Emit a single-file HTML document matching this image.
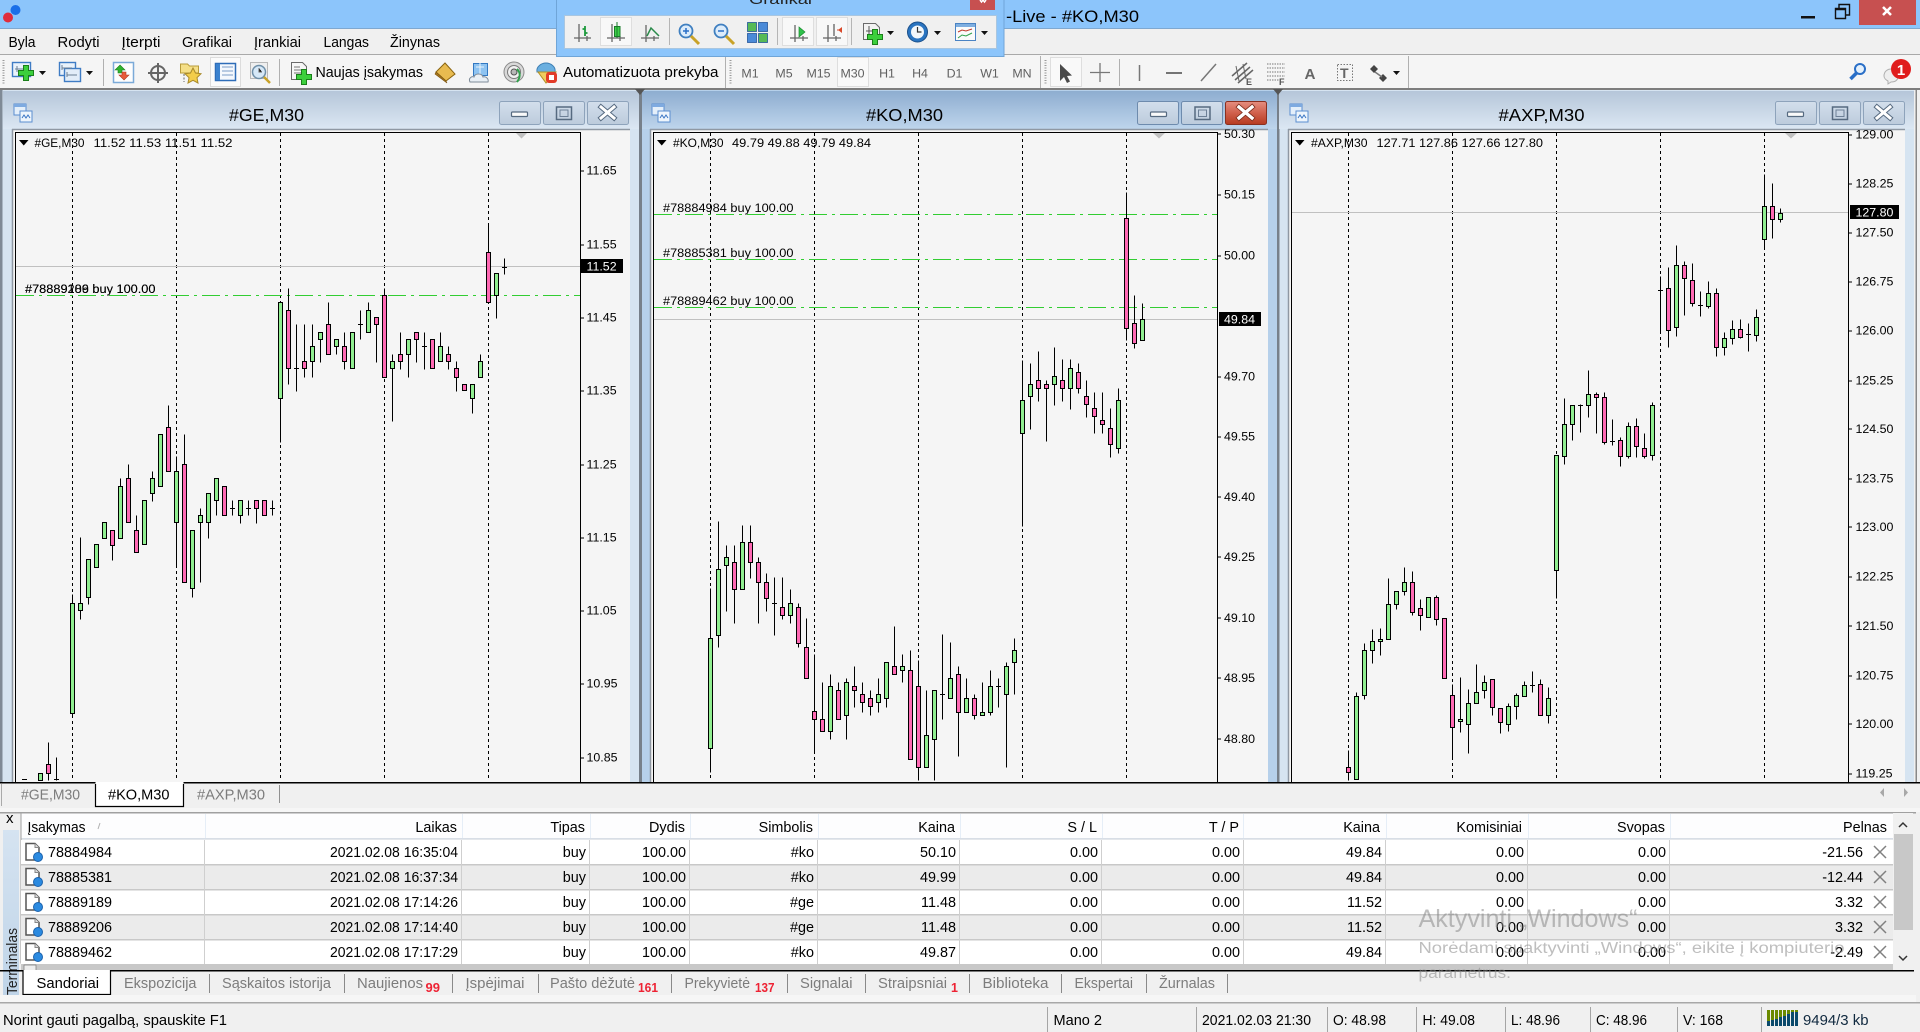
<!DOCTYPE html>
<html><head><meta charset="utf-8"><title>#KO,M30</title>
<style>
html,body{margin:0;padding:0;background:#f0f0f0;overflow:hidden}
svg{display:block;font-family:"Liberation Sans",sans-serif}
text{fill:#000;font-size:14.4px}
.c text,text.c{font-size:12.4px}
.a{text-anchor:end}
.g text,text.g{fill:#7c7c7c}
.tf text{font-size:12.4px;fill:#606060;text-anchor:middle}
.w{fill:none;stroke:#000;stroke-width:1}
.gb{fill:#90ee90;stroke:#000;stroke-width:1}
.pb{fill:#ff69b4;stroke:#000;stroke-width:1}
.cr{shape-rendering:crispEdges}
.n text{fill:#ee2233;font-weight:bold;font-size:12.5px}
.ax{fill:none;stroke:#666;stroke-width:1.3}
</style></head><body>
<svg width="1920" height="1032" viewBox="0 0 1920 1032" xmlns="http://www.w3.org/2000/svg">
<defs>
<linearGradient id="tg" x1="0" y1="0" x2="0" y2="1"><stop offset="0" stop-color="#b5c6d9"/><stop offset="1" stop-color="#dbe7f3"/></linearGradient>
<linearGradient id="tk" x1="0" y1="0" x2="0" y2="1"><stop offset="0" stop-color="#8eadd0"/><stop offset="1" stop-color="#bed5ec"/></linearGradient>
<linearGradient id="bg" x1="0" y1="0" x2="0" y2="1"><stop offset="0" stop-color="#d3dfec"/><stop offset="1" stop-color="#bccbdc"/></linearGradient>
<linearGradient id="br" x1="0" y1="0" x2="0" y2="1"><stop offset="0" stop-color="#e58e80"/><stop offset=".5" stop-color="#d0604c"/><stop offset="1" stop-color="#b63a20"/></linearGradient>
<linearGradient id="st" x1="0" y1="0" x2="0" y2="1"><stop offset="0" stop-color="#d5e3f1"/><stop offset="1" stop-color="#bfd4e8"/></linearGradient>
<path id="plus" d="M-2.5-7.5h5v5h5v5h-5v5h-5v-5h-5v-5h5z" fill="#3ccf3c" stroke="#1b7f1b"/>
<g id="wi"><rect x="0" y="0" width="12" height="11" fill="#e4effa" stroke="#5b8ed0"/><rect x="0" y="0" width="12" height="3" fill="#7eaae0"/><rect x="6" y="7" width="12" height="11" fill="#eef5fc" stroke="#5b8ed0"/><path d="M8 14l2-3 2 3 2-3 2 3" fill="none" stroke="#3a76c4"/></g>
<g id="doc"><path d="M1.500 .5h9l4 4v12.500h-13z" fill="#fff" stroke="#555" stroke-width="1.500"/><path d="M10.500 .5v4h4" fill="#ddd" stroke="#888"/><circle cx="13.500" cy="14" r="4.500" fill="#2b8ae0" stroke="#1b62ad"/></g>
<path id="xr" d="M-6-6L6 6M6-6L-6 6" stroke="#808080" stroke-width="1.500" fill="none"/>
<path id="tri" d="M0 0h7l-3.500 4z" fill="#111"/>
</defs>

<!-- base -->
<rect width="1920" height="1032" fill="#f0f0f0"/>
<!-- title bar -->
<rect width="1920" height="28" fill="#8cc5fb"/>
<rect y="28" width="1920" height="1" fill="#7fa8d0"/>
<circle cx="8" cy="17.500" r="5" fill="#e02c3c"/><circle cx="15.500" cy="10" r="5" fill="#1a6fe8"/>
<text x="1006" y="22" style="font-size:17px" fill="#1a2a3a" textLength="133" lengthAdjust="spacingAndGlyphs">-Live - #KO,M30</text>
<rect x="1801" y="16" width="14" height="2.500" fill="#111"/>
<path d="M1835.500 8.500h10v10h-10zM1835.500 9.500h10M1839 8V4.500h10.500V15H1846" fill="none" stroke="#111" stroke-width="1.400"/>
<rect x="1859" width="57" height="25" fill="#c75050"/>
<path d="M1883 7l8 8M1891 7l-8 8" stroke="#fff" stroke-width="2.500"/>

<!-- menu -->
<rect y="29" width="1920" height="25" fill="#f0f0f0"/>
<rect y="54" width="1920" height="1" fill="#a9a9a9"/>
<text x="8.500" y="47" textLength="27" lengthAdjust="spacingAndGlyphs">Byla</text>
<text x="57.500" y="47" textLength="42" lengthAdjust="spacingAndGlyphs">Rodyti</text>
<text x="121.500" y="47" textLength="39" lengthAdjust="spacingAndGlyphs">Įterpti</text>
<text x="182" y="47" textLength="50" lengthAdjust="spacingAndGlyphs">Grafikai</text>
<text x="254" y="47" textLength="47" lengthAdjust="spacingAndGlyphs">Įrankiai</text>
<text x="323.500" y="47" textLength="45.500" lengthAdjust="spacingAndGlyphs">Langas</text>
<text x="390" y="47" textLength="50" lengthAdjust="spacingAndGlyphs">Žinynas</text>

<!-- toolbar -->
<rect y="55" width="1920" height="33" fill="#f5f5f5"/>
<rect y="88" width="1920" height="2" fill="#7d7d7d"/>
<path d="M3.500 60v25M730.500 60v25M1045.500 60v25" stroke="#999" stroke-width="2" stroke-dasharray="1 1.500"/>
<path d="M103.500 59v27M279.500 59v27M725.500 56v32M1040.500 56v32M1119.500 59v27M1408.500 56v32" stroke="#b0b0b0"/>

<!-- toolbar icons -->
<rect x="12.500" y="62.500" width="18" height="14" fill="#e9f2fb" stroke="#3f7cc4" stroke-width="1.400"/><path d="M15 69h10M17 66v6" stroke="#6b7f95"/>
<use href="#plus" x="26" y="73"/>
<use href="#tri" x="39" y="71"/>
<rect x="59.500" y="62.500" width="16" height="13" fill="#e9f2fb" stroke="#3f7cc4" stroke-width="1.400"/><rect x="64.500" y="68.500" width="16" height="13" fill="#e2edf8" stroke="#3f7cc4" stroke-width="1.400"/><path d="M62 68h10M67 75h10M62 65v5M67 72v5" stroke="#6b7f95"/>
<use href="#tri" x="86" y="71"/>
<rect x="113.500" y="62.500" width="20" height="20" fill="#fdfdfd" stroke="#7baad8" stroke-width="1.500"/><path d="M120 65l5 5h-3v3h-4v-3h-3z" fill="#2fb52f" stroke="#1d7f1d" stroke-width=".6"/><path d="M124 80l5-5h-3v-3h-4v3h-3z" fill="#e85a3a" stroke="#b03a20" stroke-width=".6"/>
<circle cx="158" cy="73" r="7" fill="none" stroke="#666" stroke-width="2"/><path d="M158 63v20M148 73h20" stroke="#666" stroke-width="2"/>
<path d="M180.500 64h7l2 2h9v7h-18z" fill="#f5df87" stroke="#b89b3a"/><path d="M193 68l2.500 5 5.500.7-4 4 1 5.300-5-2.700-5 2.700 1-5.300-4-4 5.500-.7z" fill="#f3cd4a" stroke="#a98a2a"/><path d="M184 74v8" stroke="#666" stroke-dasharray="2 1.500"/>
<rect x="210.500" y="57.500" width="30" height="29" fill="#fbfbfb" stroke="#dcdcdc"/>
<rect x="215.500" y="63.500" width="20" height="17" fill="#f4f8fd" stroke="#2e6db8" stroke-width="1.500"/><rect x="216" y="64" width="4" height="16" fill="#3b82cf"/><path d="M222 67h11M222 71h11M222 75h11" stroke="#7a9cc6"/>
<rect x="250.500" y="62.500" width="17" height="16" fill="#efefef" stroke="#b8b8b8"/><circle cx="259" cy="72" r="6.500" fill="#d6e8f7" stroke="#6f8fa8" stroke-width="1.500"/><path d="M264 77l6 6" stroke="#c9a227" stroke-width="2.500"/><path d="M259 68v4h3" stroke="#666"/>
<path d="M291.500 62.500h11l4 4v13h-15z" fill="#f6f6f6" stroke="#6a6a6a"/><path d="M294 67h6M294 70h10M294 73h10" stroke="#777"/>
<use href="#plus" x="304" y="77"/>
<text x="315.500" y="77" textLength="107.500" lengthAdjust="spacingAndGlyphs">Naujas įsakymas</text>
<path d="M445 63l10 11-9 7-10-9z" fill="#e8bb50" stroke="#8a6410"/><path d="M436 72l10 9 1 2-12-9z" fill="#a9761c" stroke="#7a5410" stroke-width=".6"/>
<path d="M473.500 63.500h14v12h-14z" fill="#8ec3f1" stroke="#3278c2"/><path d="M476 67h8M480 63v12" stroke="#e8f3fc"/><path d="M470 82c-2-4 2-6 4-5 1-4 8-4 9 0 3-1 6 2 5 5z" fill="#e9eff5" stroke="#7f8c99"/>
<circle cx="514" cy="72" r="10" fill="#d9d9d9" stroke="#8a8a8a"/><circle cx="514" cy="72" r="6.500" fill="#f1f1f1" stroke="#7a7a7a"/><circle cx="514" cy="72" r="3" fill="#b8b8b8" stroke="#555"/><path d="M517 69c4 4 3 9 0 13" stroke="#31a24c" stroke-width="2" fill="none"/>
<path d="M537 72c-1-5 4-9 9-9s10 4 9 9z" fill="#6aafe0" stroke="#3e7fb4"/><path d="M538 72l8 11 6-5 4-6z" fill="#f0cc5e" stroke="#b08f25"/><rect x="546" y="72" width="11" height="11" rx="3" fill="#e23b28"/><rect x="549" y="75" width="5" height="5" fill="#fff"/>
<text x="563" y="77" textLength="155.500" lengthAdjust="spacingAndGlyphs">Automatizuota prekyba</text>

<!-- timeframes -->
<rect x="837.500" y="57.500" width="31" height="29" fill="#f9f9f9" stroke="#dedede"/>
<g class="tf">
<text x="750" y="77.500">M1</text><text x="784" y="77.500">M5</text><text x="818.500" y="77.500">M15</text><text x="852.500" y="77.500">M30</text><text x="887" y="77.500">H1</text><text x="920" y="77.500">H4</text><text x="954.500" y="77.500">D1</text><text x="989.500" y="77.500">W1</text><text x="1022" y="77.500">MN</text>
</g>

<!-- drawing tools -->
<rect x="1050.500" y="57.500" width="31" height="29" fill="#f9f9f9" stroke="#dedede"/>
<path d="M1060 64v17l4-4 3 6 3-1.500-3-5.500 5-.5z" fill="#4a4a4a"/>
<path d="M1100 63v19M1090 72.500h20" stroke="#777" stroke-width="1.300"/>
<path d="M1139.500 65v16" stroke="#777" stroke-width="1.500"/>
<path d="M1166 73h16" stroke="#666" stroke-width="1.800"/>
<path d="M1201 81l15-17" stroke="#777" stroke-width="1.500"/>
<path d="M1232 76l15-13M1235 80l15-13M1238 83l15-13" stroke="#666" stroke-width="1.500"/><path d="M1236 66l3 15M1243 64l3 15" stroke="#666"/>
<text x="1246" y="85" style="font-size:9px;font-weight:bold;fill:#555">E</text>
<path d="M1267 64h18M1267 68h18M1267 72h18M1267 76h18M1267 80h12" stroke="#777" stroke-dasharray="1.500 1"/>
<text x="1279" y="85" style="font-size:9px;font-weight:bold;fill:#555">F</text>
<text x="1304.500" y="79" textLength="11" lengthAdjust="spacingAndGlyphs" style="font-size:15px;font-weight:bold;fill:#666">A</text>
<rect x="1337.500" y="64.500" width="15" height="16" fill="none" stroke="#777" stroke-dasharray="1.500 1.500"/>
<text x="1340" y="78" style="font-size:14px;font-weight:bold;fill:#666">T</text>
<path d="M1374 65l4 4-4 4-4-4zM1383 74l4 4-4 4-4-4z" fill="#444"/><path d="M1375 72l7 5" stroke="#777" stroke-width="1.500"/>
<use href="#tri" x="1393" y="71"/>
<circle cx="1860" cy="69" r="5" fill="#e5f1fc" stroke="#2a6fc7" stroke-width="2"/><path d="M1856.500 73l-6 6" stroke="#2a6fc7" stroke-width="3.500"/>
<path d="M1884 76c0-5 4-7 7-7s7 2 7 7-4 6-7 6l-3 2v-3c-2-1-4-3-4-5z" fill="#eee" stroke="#b0b0b0"/>
<circle cx="1901" cy="69" r="10" fill="#e01c1c"/><text x="1901" y="75" text-anchor="middle" style="font-size:15px;font-weight:bold;fill:#fff">1</text>

<!-- GE WINDOW -->
<rect y="90" width="640" height="692" fill="#d6e4f1"/>
<rect y="90" x="0" width="2.500" height="692" fill="#7f8a96"/>
<rect x="3" y="91" width="636" height="38" fill="url(#tg)"/>
<rect x="12" y="129" width="618" height="653" fill="#f5f5f5"/>
<path d="M12 129.500h618M12.500 129v653" stroke="#8f98a3" stroke-width="1.500"/>
<text x="266.500" y="121" text-anchor="middle" textLength="75" lengthAdjust="spacingAndGlyphs" style="font-size:17.600px">#GE,M30</text>
<use href="#wi" x="14" y="104"/>
<!-- KO WINDOW -->
<rect x="642" y="90" width="635" height="692" fill="#b6d0ea"/>
<rect x="639" y="90" width="3" height="692" fill="#77808a"/>
<rect x="642" y="91" width="635" height="38" fill="url(#tk)"/>
<rect x="650" y="129" width="618" height="653" fill="#f5f5f5"/>
<path d="M650 129.500h618M650.500 129v653" stroke="#8f98a3" stroke-width="1.500"/>
<text x="904.500" y="121" text-anchor="middle" textLength="77" lengthAdjust="spacingAndGlyphs" style="font-size:17.600px">#KO,M30</text>
<use href="#wi" x="652" y="104"/>
<!-- AXP WINDOW -->
<rect x="1279" y="90" width="637" height="692" fill="#d6e4f1"/>
<rect x="1277" y="90" width="2.500" height="692" fill="#77808a"/>
<rect x="1279" y="91" width="635" height="38" fill="url(#tg)"/>
<rect x="1288" y="129" width="617" height="653" fill="#f5f5f5"/>
<path d="M1288 129.500h617M1288.500 129v653" stroke="#8f98a3" stroke-width="1.500"/>
<text x="1541.500" y="121" text-anchor="middle" textLength="86" lengthAdjust="spacingAndGlyphs" style="font-size:17.600px">#AXP,M30</text>
<use href="#wi" x="1290" y="104"/>
<rect x="1914" y="90" width="6" height="692" fill="#f0f0f0"/><rect x="1915.500" y="90" width="1.500" height="692" fill="#888"/>
<path d="M635 89h10l-5 6zM1273 89h10l-5 6z" fill="#555"/>

<!-- Window buttons -->
<g stroke="#8ea3bb" fill="url(#bg)"><rect x="499.500" y="101.500" width="41" height="23" rx="2"/><rect x="543.500" y="101.500" width="41" height="23" rx="2"/><rect x="587.500" y="101.500" width="41" height="23" rx="2"/>
<rect x="1137.500" y="101.500" width="41" height="23" rx="2" stroke="#6e8bad"/><rect x="1181.500" y="101.500" width="41" height="23" rx="2" stroke="#6e8bad"/><rect x="1225.500" y="101.500" width="41" height="23" rx="2" fill="url(#br)" stroke="#8a3020"/>
<rect x="1775.500" y="101.500" width="41" height="23" rx="2"/><rect x="1819.500" y="101.500" width="41" height="23" rx="2"/><rect x="1863.500" y="101.500" width="41" height="23" rx="2"/></g>
<g fill="#fafafa" stroke="#566a80" stroke-width="1.200">
<rect x="511.500" y="112" width="16" height="4.500" rx="1"/><rect x="1150.500" y="112" width="16" height="4.500" rx="1"/><rect x="1787.500" y="112" width="16" height="4.500" rx="1"/>
</g>
<g fill="none" stroke="#566a80" stroke-width="1.500">
<rect x="556.500" y="107" width="15" height="12.500"/><rect x="1195" y="107" width="15" height="12.500"/><rect x="1832.500" y="107" width="15" height="12.500"/>
</g>
<g fill="none">
<rect x="560" y="110" width="8" height="6.500" stroke="#6d8097"/><rect x="1198.500" y="110" width="8" height="6.500" stroke="#6d8097"/><rect x="1836" y="110" width="8" height="6.500" stroke="#6d8097"/>
</g>
<g fill="none" stroke-linecap="square">
<path d="M601 107l13 11M614 107l-13 11" stroke="#566a80" stroke-width="5"/><path d="M601 107l13 11M614 107l-13 11" stroke="#fff" stroke-width="3"/>
<path d="M1239 107l13 11M1252 107l-13 11" stroke="#7a2a1a" stroke-width="5"/><path d="M1239 107l13 11M1252 107l-13 11" stroke="#fff" stroke-width="3.400"/>
<path d="M1877 107l13 11M1890 107l-13 11" stroke="#566a80" stroke-width="5"/><path d="M1877 107l13 11M1890 107l-13 11" stroke="#fff" stroke-width="3"/>
</g>

<!-- GRIDS -->
<g class="cr" stroke="#000" fill="none" stroke-width="1">
<path d="M15.500 782V132.500H580.500V782"/>
<path d="M653.500 782V132.500H1217.500V782"/>
<path d="M1291.500 782V132.500H1848.500V782"/>
<g stroke-dasharray="3 3">
<path d="M72.500 133V781M176.500 133V781M280.500 133V781M384.500 133V781M488.500 133V781"/>
<path d="M710.500 133V781M814.500 133V781M918.500 133V781M1022.500 133V781M1126.500 133V781"/>
<path d="M1348.500 133V781M1452.500 133V781M1556.500 133V781M1660.500 133V781M1764.500 133V781"/>
</g>
<!-- ticks -->
<path d="M581 171h3M581 245h3M581 318h3M581 391h3M581 465h3M581 538h3M581 611h3M581 684h3M581 758h3"/>
<path d="M1218 134h3M1218 195h3M1218 256h3M1218 377h3M1218 437h3M1218 497h3M1218 557h3M1218 618h3M1218 678h3M1218 739h3"/>
<path d="M1849 135h3M1849 184h3M1849 233h3M1849 282h3M1849 331h3M1849 381h3M1849 429h3M1849 479h3M1849 527h3M1849 577h3M1849 626h3M1849 676h3M1849 724h3M1849 774h3"/>
</g>
<!-- Price lines -->
<g stroke="#c0c0c0" class="cr"><path d="M16 266.500H580M654 319.500H1217M1292 212.500H1848"/></g>
<g stroke="#32cd32" stroke-dasharray="18 5 3 5" class="cr"><path d="M16 295.500H580M654 214.500H1217M654 259.500H1217M654 307.500H1217"/></g>
<path d="M516 133h11l-5.500 5.500zM1153 133h12l-6 5.500zM1785 133h12l-6 5.500z" fill="#c0c0c0"/>

<!-- Candles -->
<g class="cr" transform="translate(0 .5)">
<!-- GE -->
<path class="w" d="M22 779h5M54 779h5M48.500 742V780M56.500 757V780M72.500 594V717M80.500 537V619M88.500 559V604M112.500 530V560M120.500 478V538M128.500 464V522M136.500 515V552M152.500 471V501M168.500 405V471M176.500 456V567M184.500 434V582M192.500 530V597M200.500 508V582M208.500 493V538M216.500 478V515M232.500 500V515M230 508h5M240.500 500V523M248.500 500V515M246 508h5M256.500 500V523M272.500 500V515M270 508h5M280.500 302V442M288.500 288V384M296.500 324V391M294 368h5M304.500 324V377M312.500 324V377M320.500 332V362M328.500 302V354M336.500 339V354M344.500 332V369M360.500 310V339M358 324h5M368.500 302V332M376.500 317V362M384.500 288V377M392.500 354V421M400.500 332V369M408.500 339V377M416.500 332V362M424.500 332V369M422 346h5M440.500 332V361M448.500 346V369M456.500 361V391M472.500 384V413M480.500 354V377M488.500 223V302M496.500 273V318M504.500 258V274M502 267h5"/>
<path class="gb" d="M38.500 773h4V780h-4zM70.500 603h4V713h-4zM78.500 603h4V610h-4zM86.500 559h4V597h-4zM94.500 544h4V567h-4zM102.500 522h4V538h-4zM118.500 486h4V538h-4zM142.500 500h4V544h-4zM150.500 478h4V493h-4zM158.500 434h4V486h-4zM174.500 471h4V522h-4zM190.500 530h4V588h-4zM198.500 515h4V522h-4zM206.500 493h4V522h-4zM214.500 478h4V500h-4zM238.500 500h4V515h-4zM278.500 302h4V398h-4zM310.500 346h4V361h-4zM318.500 332h4V339h-4zM334.500 339h4V346h-4zM350.500 332h4V368h-4zM366.500 310h4V332h-4zM390.500 361h4V368h-4zM406.500 339h4V354h-4zM438.500 346h4V361h-4zM470.500 384h4V398h-4zM478.500 361h4V377h-4zM494.500 273h4V295h-4z"/>
<path class="pb" d="M46.500 764h4V773h-4zM110.500 530h4V545h-4zM126.500 478h4V522h-4zM134.500 530h4V552h-4zM166.500 427h4V471h-4zM182.500 464h4V582h-4zM222.500 486h4V515h-4zM254.500 500h4V508h-4zM262.500 500h4V515h-4zM286.500 310h4V368h-4zM302.500 361h4V368h-4zM326.500 324h4V354h-4zM342.500 346h4V361h-4zM374.500 317h4V324h-4zM382.500 295h4V377h-4zM398.500 354h4V361h-4zM414.500 332h4V339h-4zM430.500 339h4V368h-4zM446.500 354h4V361h-4zM454.500 368h4V377h-4zM462.500 384h4V390h-4zM486.500 252h4V302h-4z"/>
<!-- KO -->
<path class="w" d="M710.500 588V772M718.500 521V647M726.500 545V611M734.500 545V623M742.500 525V589M750.500 525V578M758.500 557V623M766.500 573V611M774.500 577V635M772 603h5M782.500 577V619M790.500 589V623M798.500 603V647M806.500 618V678M814.500 654V753M822.500 682V731M830.500 674V739M838.500 682V719M846.500 678V739M854.500 666V707M862.500 682V712M870.500 690V715M878.500 678V712M886.500 662V707M894.500 626V674M902.500 654V682M910.500 650V759M918.500 660V780M926.500 690V767M934.500 690V780M942.500 634V719M940 694h5M950.500 642V698M958.500 666V756M966.500 678V712M974.500 694V719M982.500 682V715M990.500 670V715M998.500 678V707M996 686h5M1006.500 662V767M1014.500 638V694M1022.500 360V526M1030.500 363V429M1038.500 351V401M1046.500 380V441M1054.500 347V405M1062.500 359V401M1070.500 359V409M1078.500 363V393M1086.500 380V417M1094.500 392V433M1102.500 392V433M1110.500 408V457M1118.500 388V453M1126.500 192V340M1134.500 295V348M1142.500 303V340"/>
<path class="gb" d="M708.500 638h4V748h-4zM716.500 569h4V635h-4zM724.500 557h4V565h-4zM740.500 542h4V589h-4zM788.500 603h4V615h-4zM828.500 686h4V731h-4zM844.500 682h4V715h-4zM876.500 694h4V702h-4zM884.500 662h4V698h-4zM900.500 666h4V670h-4zM924.500 735h4V767h-4zM932.500 690h4V739h-4zM948.500 678h4V698h-4zM964.500 698h4V712h-4zM980.500 712h4V715h-4zM988.500 686h4V712h-4zM1004.500 666h4V694h-4zM1012.500 650h4V662h-4zM1020.500 400h4V433h-4zM1028.500 384h4V396h-4zM1052.500 376h4V384h-4zM1068.500 368h4V388h-4zM1116.500 400h4V448h-4zM1140.500 319h4V340h-4z"/>
<path class="pb" d="M732.500 562h4V589h-4zM748.500 542h4V562h-4zM756.500 562h4V582h-4zM764.500 582h4V598h-4zM780.500 607h4V615h-4zM796.500 607h4V643h-4zM804.500 647h4V678h-4zM812.500 711h4V719h-4zM820.500 719h4V731h-4zM836.500 690h4V719h-4zM852.500 686h4V690h-4zM860.500 694h4V702h-4zM868.500 698h4V706h-4zM892.500 666h4V674h-4zM908.500 670h4V759h-4zM916.500 686h4V767h-4zM956.500 674h4V712h-4zM972.500 698h4V715h-4zM1036.500 380h4V388h-4zM1044.500 384h4V388h-4zM1060.500 380h4V388h-4zM1076.500 372h4V388h-4zM1084.500 396h4V404h-4zM1092.500 408h4V416h-4zM1100.500 420h4V424h-4zM1108.500 428h4V444h-4zM1124.500 218h4V328h-4zM1132.500 323h4V343h-4z"/>
<!-- AXP -->
<path class="w" d="M1348.500 750V780M1356.500 692V779M1364.500 643V699M1372.500 629V663M1380.500 628V655M1388.500 578V639M1396.500 591V609M1404.500 567V595M1412.500 571V615M1420.500 599V630M1436.500 595V625M1452.500 684V758M1460.500 677V732M1468.500 689V753M1476.500 664V703M1484.500 675V698M1492.500 679V715M1500.500 708V733M1508.500 703V731M1516.500 693V719M1524.500 681V696M1532.500 671V692M1530 685h5M1540.500 679V715M1548.500 687V723M1556.500 455V598M1564.500 398V464M1572.500 405V440M1580.500 404V432M1578 405h5M1588.500 370V417M1596.500 392V433M1604.500 392V444M1612.500 419V445M1610 441h5M1620.500 437V466M1628.500 422V458M1636.500 418V457M1644.500 433V458M1652.500 402V460M1660.500 276V333M1658 290h5M1668.500 267V347M1676.500 245V336M1684.500 261V315M1692.500 263V306M1700.500 291V316M1698 305h5M1708.500 281V308M1716.500 288V356M1724.500 332V355M1732.500 320V344M1740.500 319V338M1748.500 323V351M1746 334h5M1756.500 309V341M1764.500 174V248M1772.500 183V238M1780.500 208V222"/>
<path class="gb" d="M1354.500 696h4V779h-4zM1362.500 650h4V695h-4zM1370.500 641h4V650h-4zM1378.500 639h4V641h-4zM1386.500 604h4V639h-4zM1394.500 591h4V604h-4zM1402.500 582h4V591h-4zM1426.500 597h4V617h-4zM1458.500 719h4V721h-4zM1466.500 703h4V724h-4zM1474.500 692h4V703h-4zM1482.500 682h4V690h-4zM1506.500 706h4V724h-4zM1514.500 695h4V706h-4zM1522.500 685h4V696h-4zM1546.500 698h4V715h-4zM1554.500 455h4V570h-4zM1562.500 424h4V456h-4zM1570.500 405h4V424h-4zM1586.500 394h4V405h-4zM1626.500 426h4V456h-4zM1650.500 405h4V455h-4zM1674.500 265h4V327h-4zM1706.500 293h4V306h-4zM1722.500 338h4V347h-4zM1730.500 329h4V338h-4zM1754.500 317h4V335h-4zM1762.500 206h4V239h-4zM1778.500 213h4V219h-4z"/>
<path class="pb" d="M1346.500 767h4V772h-4zM1410.500 582h4V612h-4zM1418.500 608h4V615h-4zM1434.500 597h4V619h-4zM1442.500 618h4V678h-4zM1450.500 695h4V727h-4zM1490.500 679h4V707h-4zM1498.500 708h4V722h-4zM1538.500 684h4V715h-4zM1594.500 394h4V397h-4zM1602.500 397h4V442h-4zM1618.500 440h4V456h-4zM1634.500 426h4V446h-4zM1642.500 448h4V456h-4zM1666.500 288h4V330h-4zM1682.500 265h4V278h-4zM1690.500 280h4V303h-4zM1714.500 293h4V347h-4zM1738.500 329h4V337h-4zM1770.500 206h4V219h-4z"/>
</g>

<!-- Chart headers -->
<g class="c">
<path d="M19 140h9.500l-4.750 5.500zM657 140h9.500l-4.750 5.500zM1295 140h9.500l-4.750 5.500z" fill="#000"/>
<text x="34.500" y="147" textLength="50" lengthAdjust="spacingAndGlyphs">#GE,M30</text>
<text x="93.500" y="147" textLength="139" lengthAdjust="spacingAndGlyphs">11.52 11.53 11.51 11.52</text>
<text x="673" y="147" textLength="50.500" lengthAdjust="spacingAndGlyphs">#KO,M30</text>
<text x="732" y="147" textLength="139" lengthAdjust="spacingAndGlyphs">49.79 49.88 49.79 49.84</text>
<text x="1311" y="147" textLength="56.500" lengthAdjust="spacingAndGlyphs">#AXP,M30</text>
<text x="1376.500" y="147" textLength="166.500" lengthAdjust="spacingAndGlyphs">127.71 127.86 127.66 127.80</text>
<!-- order labels -->
<text x="25" y="293" textLength="130.500" lengthAdjust="spacingAndGlyphs">#78889189 buy 100.00</text>
<text x="25" y="293" textLength="130.500" lengthAdjust="spacingAndGlyphs">#78889206 buy 100.00</text>
<text x="663" y="212" textLength="130.500" lengthAdjust="spacingAndGlyphs">#78884984 buy 100.00</text>
<text x="663" y="257" textLength="130.500" lengthAdjust="spacingAndGlyphs">#78885381 buy 100.00</text>
<text x="663" y="305" textLength="130.500" lengthAdjust="spacingAndGlyphs">#78889462 buy 100.00</text>
<g transform="translate(0 -1)">
<!-- axis GE -->
<text x="586.500" y="175.500">11.65</text><text x="586.500" y="249.500">11.55</text><text x="586.500" y="322.500">11.45</text><text x="586.500" y="395.500">11.35</text><text x="586.500" y="469.500">11.25</text><text x="586.500" y="542.500">11.15</text><text x="586.500" y="615.500">11.05</text><text x="586.500" y="688.500">10.95</text><text x="586.500" y="762.500">10.85</text>
<!-- axis KO -->
<text x="1224" y="139">50.30</text><text x="1224" y="199.500">50.15</text><text x="1224" y="260.500">50.00</text><text x="1224" y="381.500">49.70</text><text x="1224" y="441.500">49.55</text><text x="1224" y="502">49.40</text><text x="1224" y="562">49.25</text><text x="1224" y="623">49.10</text><text x="1224" y="683">48.95</text><text x="1224" y="744">48.80</text>
<!-- axis AXP -->
<text x="1855.500" y="139.500">129.00</text><text x="1855.500" y="188.500">128.25</text><text x="1855.500" y="237.500">127.50</text><text x="1855.500" y="286.500">126.75</text><text x="1855.500" y="335.500">126.00</text><text x="1855.500" y="385.500">125.25</text><text x="1855.500" y="434">124.50</text><text x="1855.500" y="483.500">123.75</text><text x="1855.500" y="532">123.00</text><text x="1855.500" y="581.500">122.25</text><text x="1855.500" y="631">121.50</text><text x="1855.500" y="680.500">120.75</text><text x="1855.500" y="729">120.00</text><text x="1855.500" y="778.500">119.25</text>
</g>
<!-- price labels -->
<rect x="581" y="259" width="42" height="14" fill="#000"/><text x="586.500" y="270.500" style="fill:#fff">11.52</text>
<rect x="1219" y="312" width="42" height="14" fill="#000"/><text x="1224" y="323.500" style="fill:#fff">49.84</text>
<rect x="1850" y="205" width="49" height="14" fill="#000"/><text x="1855.500" y="216.500" style="fill:#fff">127.80</text>
</g>

<!-- Floating toolbar -->
<rect x="556.500" y="-1" width="447.500" height="57.500" fill="#8cc5fb" stroke="#6fa5d8"/>
<rect x="564.500" y="15.500" width="432" height="33" fill="#f0f0f0" stroke="#a9c6e0"/>
<text x="749" y="4" textLength="63" lengthAdjust="spacingAndGlyphs" style="font-size:15px;fill:#222">Grafikai</text>
<rect x="970" y="0" width="25" height="10" fill="#c75050"/><path d="M980 0l1.500 2 1.500-2 1.500 2 1.500-2" stroke="#fff" fill="none" stroke-width="1.500"/>
<g fill="#f8f8f8" stroke="#dedede"><rect x="600.500" y="17.500" width="31" height="28"/><rect x="782.500" y="17.500" width="31" height="28"/><rect x="816.500" y="17.500" width="31" height="28"/></g>
<path d="M669.500 18v27M777.500 18v27M851.500 18v27" stroke="#b5b5b5"/>
<!-- axes icons -->
<path class="ax" d="M579 24v18M574 38h17M587 36v5M612 24v18M607 38h18M620 36v5M646 25v17M641 38h18M654 36v5M795 25v17M790 38h18M803 36v5M828 25v17M823 38h18M836 36v5"/>
<path d="M585 26v10M582.500 29h2.500M585 33h2.500" stroke="#1c9a3c" stroke-width="1.800" fill="none"/>
<rect x="614.500" y="26.500" width="5.500" height="10" fill="#3fd24a" stroke="#1a7a2a"/><path d="M617 22v16" stroke="#1a7a2a"/>
<path d="M647 36l4-8 5 5 3 3" fill="none" stroke="#2a8a4a" stroke-width="1.500"/>
<path d="M799 27l6 5-6 5z" fill="#2fc04a" stroke="#1b8a30" stroke-width=".7"/>
<path d="M834 24v12" stroke="#333"/><path d="M838 30l4-3v6z" fill="#d9492a"/><path d="M837 30h5" stroke="#d9492a"/>
<circle cx="686" cy="31" r="6.500" fill="#dcecfb" stroke="#3f7fc0" stroke-width="1.800"/><path d="M683 31h6M686 28v6" stroke="#2a6fc7" stroke-width="1.500"/><path d="M691 36l8 8" stroke="#c9a227" stroke-width="3"/>
<circle cx="721" cy="31" r="6.500" fill="#dcecfb" stroke="#3f7fc0" stroke-width="1.800"/><path d="M718 31h6" stroke="#2a6fc7" stroke-width="1.500"/><path d="M726 36l8 8" stroke="#c9a227" stroke-width="3"/>
<g stroke="#23569c" stroke-width=".8"><rect x="747.500" y="22.500" width="9" height="9" fill="#57b957"/><rect x="758.500" y="22.500" width="9" height="9" fill="#4a8ad8"/><rect x="747.500" y="33.500" width="9" height="9" fill="#4a8ad8"/><rect x="758.500" y="33.500" width="9" height="9" fill="#57b957"/></g>
<path d="M863.500 23.500h12l4 4v12h-16z" fill="#f2f2f2" stroke="#6a6a6a"/><path d="M869 26v10M866 31h6" stroke="#555"/>
<use href="#plus" x="875" y="37"/>
<use href="#tri" x="887" y="31"/>
<circle cx="917.500" cy="32" r="10" fill="#2a74c0" stroke="#1a4f8a"/><circle cx="917.500" cy="32" r="6.500" fill="#f2f7fb"/><path d="M917.500 27v5h4" fill="none" stroke="#333" stroke-width="1.200"/>
<use href="#tri" x="934" y="31"/>
<rect x="955.500" y="23.500" width="20" height="17" fill="#fbfbfb" stroke="#4a83c3"/><rect x="956" y="24" width="19" height="3" fill="#7eaee0"/><path d="M958 32l4-2 4 1 6-2" stroke="#c0392b" fill="none"/><path d="M958 38l4-3 4 1 6-3" stroke="#2fa04a" fill="none"/>
<use href="#tri" x="981" y="31"/>

<!-- Tab bar -->
<rect y="782" width="1920" height="1.500" fill="#000"/>
<rect y="784" width="1920" height="24" fill="#f0f0f0"/>
<rect y="808" width="1920" height="4" fill="#f6f6f6"/>
<rect x="1" y="784" width="1" height="22" fill="#aaa"/>
<rect x="95.500" y="782" width="88" height="24" fill="#fff"/>
<path d="M95.500 784V806.500H183.500V784" fill="none" stroke="#000" stroke-width="1.200"/>
<text x="21" y="799.500" class="g" textLength="59" lengthAdjust="spacingAndGlyphs">#GE,M30</text>
<text x="108" y="799.500" textLength="61.500" lengthAdjust="spacingAndGlyphs">#KO,M30</text>
<text x="197" y="799.500" class="g" textLength="68" lengthAdjust="spacingAndGlyphs">#AXP,M30</text>
<rect x="279" y="785" width="1" height="18" fill="#909090"/>
<path d="M1884 788v9l-4-4.500zM1904 788v9l4-4.500z" fill="#a8a8a8"/>

<!-- Terminal panel -->
<rect y="812" width="1916" height="1.500" fill="#a0a0a0"/>
<text x="6" y="823" style="font-size:15px">x</text>
<rect x="3" y="830" width="16" height="167" fill="url(#st)"/>
<text transform="translate(17 995) rotate(-90)" textLength="67" lengthAdjust="spacingAndGlyphs" style="fill:#222">Terminalas</text>

<!-- Table -->
<rect x="20.500" y="813.500" width="1872.500" height="25" fill="#fdfdfe"/>
<rect x="20.500" y="838" width="1872.500" height="1.500" fill="#d8dee6"/>
<rect x="20.500" y="813.500" width="1" height="150" fill="#a0a0a0"/>
<rect x="21" y="840" width="1872" height="24" fill="#fff"/><rect x="21" y="865" width="1872" height="24" fill="#ebebeb"/><rect x="21" y="890" width="1872" height="24" fill="#fff"/><rect x="21" y="915" width="1872" height="24" fill="#ebebeb"/><rect x="21" y="940" width="1872" height="24" fill="#fff"/>
<path class="cr" d="M21 864.500H1893M21 889.500H1893M21 914.500H1893M21 939.500H1893" stroke="#c8c8c8" stroke-width="1.500"/>
<path class="cr" d="M204.500 840V964M461.500 840V964M589.500 840V964M689.500 840V964M817.500 840V964M959.500 840V964M1101.500 840V964M1243.500 840V964M1385.500 840V964M1527.500 840V964M1669.500 840V964" stroke="#cfcfcf" stroke-width="1"/>
<path class="cr" d="M205.500 814V838M462.500 814V838M590.500 814V838M690.500 814V838M818.500 814V838M960.500 814V838M1102.500 814V838M1243.500 814V838M1386.500 814V838M1528.500 814V838M1670.500 814V838" stroke="#e6eef7" stroke-width="1"/>
<rect x="21" y="964" width="1872" height="6" fill="#c8c8c8"/>
<path d="M24 970v-5h12v5" fill="#eee" stroke="#777" stroke-width=".7"/>
<rect x="1893" y="813" width="20" height="157" fill="#f0f0f0"/>
<rect x="1894" y="834" width="19" height="96" fill="#c8c8c8"/>
<path d="M1899 827l4-4 4 4M1899 956l4 4 4-4" fill="none" stroke="#333" stroke-width="1.500"/>

<!-- header -->
<text x="27.500" y="832" textLength="58" lengthAdjust="spacingAndGlyphs">Įsakymas</text>
<path d="M98 829l2-6" stroke="#b0b0b0"/>
<g class="a" text-anchor="end">
<text x="457" y="832">Laikas</text><text x="585" y="832">Tipas</text><text x="685" y="832">Dydis</text><text x="813" y="832">Simbolis</text><text x="955" y="832">Kaina</text><text x="1097" y="832">S / L</text><text x="1239" y="832">T / P</text><text x="1380" y="832">Kaina</text><text x="1522" y="832">Komisiniai</text><text x="1665" y="832">Svopas</text><text x="1887" y="832">Pelnas</text>
</g>
<!-- rows -->
<use href="#doc" x="24.500" y="843"/><use href="#doc" x="24.500" y="868"/><use href="#doc" x="24.500" y="893"/><use href="#doc" x="24.500" y="918"/><use href="#doc" x="24.500" y="943"/>
<text x="48" y="857">78884984</text><text x="48" y="882">78885381</text><text x="48" y="907">78889189</text><text x="48" y="932">78889206</text><text x="48" y="957">78889462</text>
<g class="a" text-anchor="end">
<text x="458" y="857" textLength="128" lengthAdjust="spacingAndGlyphs">2021.02.08 16:35:04</text><text x="586" y="857">buy</text><text x="686" y="857">100.00</text><text x="814" y="857">#ko</text><text x="956" y="857">50.10</text><text x="1098" y="857">0.00</text><text x="1240" y="857">0.00</text><text x="1382" y="857">49.84</text><text x="1524" y="857">0.00</text><text x="1666" y="857">0.00</text><text x="1863" y="857">-21.56</text>
<text x="458" y="882" textLength="128" lengthAdjust="spacingAndGlyphs">2021.02.08 16:37:34</text><text x="586" y="882">buy</text><text x="686" y="882">100.00</text><text x="814" y="882">#ko</text><text x="956" y="882">49.99</text><text x="1098" y="882">0.00</text><text x="1240" y="882">0.00</text><text x="1382" y="882">49.84</text><text x="1524" y="882">0.00</text><text x="1666" y="882">0.00</text><text x="1863" y="882">-12.44</text>
<text x="458" y="907" textLength="128" lengthAdjust="spacingAndGlyphs">2021.02.08 17:14:26</text><text x="586" y="907">buy</text><text x="686" y="907">100.00</text><text x="814" y="907">#ge</text><text x="956" y="907">11.48</text><text x="1098" y="907">0.00</text><text x="1240" y="907">0.00</text><text x="1382" y="907">11.52</text><text x="1524" y="907">0.00</text><text x="1666" y="907">0.00</text><text x="1863" y="907">3.32</text>
<text x="458" y="932" textLength="128" lengthAdjust="spacingAndGlyphs">2021.02.08 17:14:40</text><text x="586" y="932">buy</text><text x="686" y="932">100.00</text><text x="814" y="932">#ge</text><text x="956" y="932">11.48</text><text x="1098" y="932">0.00</text><text x="1240" y="932">0.00</text><text x="1382" y="932">11.52</text><text x="1524" y="932">0.00</text><text x="1666" y="932">0.00</text><text x="1863" y="932">3.32</text>
<text x="458" y="957" textLength="128" lengthAdjust="spacingAndGlyphs">2021.02.08 17:17:29</text><text x="586" y="957">buy</text><text x="686" y="957">100.00</text><text x="814" y="957">#ko</text><text x="956" y="957">49.87</text><text x="1098" y="957">0.00</text><text x="1240" y="957">0.00</text><text x="1382" y="957">49.84</text><text x="1524" y="957">0.00</text><text x="1666" y="957">0.00</text><text x="1863" y="957">-2.49</text>
</g>
<use href="#xr" x="1880" y="852"/><use href="#xr" x="1880" y="877"/><use href="#xr" x="1880" y="902"/><use href="#xr" x="1880" y="927"/><use href="#xr" x="1880" y="952"/>

<!-- Bottom tabs -->
<rect x="0" y="970" width="1914" height="1.500" fill="#000"/>
<rect x="23" y="970" width="87.500" height="25" fill="#fff"/>
<path d="M23 970V994.500H110.500V970" fill="none" stroke="#000" stroke-width="1.200"/>
<text x="36.500" y="988" textLength="62.500" lengthAdjust="spacingAndGlyphs">Sandoriai</text>
<g class="g">
<text x="124" y="988" textLength="72.500" lengthAdjust="spacingAndGlyphs">Ekspozicija</text>
<text x="222" y="988" textLength="109" lengthAdjust="spacingAndGlyphs">Sąskaitos istorija</text>
<text x="357" y="988" textLength="66" lengthAdjust="spacingAndGlyphs">Naujienos</text>
<text x="465.500" y="988" textLength="59" lengthAdjust="spacingAndGlyphs">Įspėjimai</text>
<text x="550" y="988" textLength="85" lengthAdjust="spacingAndGlyphs">Pašto dėžutė</text>
<text x="684.500" y="988" textLength="65.500" lengthAdjust="spacingAndGlyphs">Prekyvietė</text>
<text x="800" y="988" textLength="52.500" lengthAdjust="spacingAndGlyphs">Signalai</text>
<text x="878" y="988" textLength="69" lengthAdjust="spacingAndGlyphs">Straipsniai</text>
<text x="982.500" y="988" textLength="66" lengthAdjust="spacingAndGlyphs">Biblioteka</text>
<text x="1074.500" y="988" textLength="58.500" lengthAdjust="spacingAndGlyphs">Ekspertai</text>
<text x="1159" y="988" textLength="56" lengthAdjust="spacingAndGlyphs">Žurnalas</text>
</g>
<g class="n">
<text x="425.500" y="992" textLength="14.500" lengthAdjust="spacingAndGlyphs">99</text>
<text x="638" y="992" textLength="20" lengthAdjust="spacingAndGlyphs">161</text>
<text x="755" y="992" textLength="19.500" lengthAdjust="spacingAndGlyphs">137</text>
<text x="951" y="992">1</text>
</g>
<path class="cr" d="M209.500 974V993M344.500 974V993M452.500 974V993M538.500 974V993M671.500 974V993M787.500 974V993M865.500 974V993M969.500 974V993M1061.500 974V993M1146.500 974V993M1227.500 974V993" stroke="#8a8a8a"/>

<!-- Status bar -->
<rect y="995" width="1916" height="7" fill="#f6f6f6"/>
<rect y="1002" width="1920" height="1.500" fill="#a8a8a8"/>
<rect y="1003.500" width="1920" height="28.500" fill="#f0f0f0"/>
<path class="cr" d="M1047.500 1007V1032M1196.500 1007V1032M1327.500 1007V1032M1416.500 1007V1032M1505.500 1007V1032M1590.500 1007V1032M1677.500 1007V1032M1761.500 1007V1032" stroke="#a5a5a5"/>
<text x="3" y="1025" textLength="224" lengthAdjust="spacingAndGlyphs">Norint gauti pagalbą, spauskite F1</text>
<text x="1053.500" y="1025" textLength="48.500" lengthAdjust="spacingAndGlyphs">Mano 2</text>
<text x="1202" y="1025" textLength="109" lengthAdjust="spacingAndGlyphs">2021.02.03 21:30</text>
<text x="1333" y="1025" textLength="53" lengthAdjust="spacingAndGlyphs">O: 48.98</text>
<text x="1422.500" y="1025" textLength="52.500" lengthAdjust="spacingAndGlyphs">H: 49.08</text>
<text x="1511" y="1025" textLength="49" lengthAdjust="spacingAndGlyphs">L: 48.96</text>
<text x="1596" y="1025" textLength="51" lengthAdjust="spacingAndGlyphs">C: 48.96</text>
<text x="1683" y="1025" textLength="40" lengthAdjust="spacingAndGlyphs">V: 168</text>
<rect x="1767" y="1010" width="31" height="16" fill="#6b8a00"/>
<path d="M1767 1026v-5h4v-1h4v-1h4v-2h4v-1h4v-2h4v-2h7v14z" fill="#0b4a6c"/>
<path d="M1770.500 1010v16M1774.500 1010v16M1778.500 1010v16M1782.500 1010v16M1786.500 1010v16M1790.500 1010v16M1794.500 1010v16" stroke="#f0f0f0"/>
<text x="1803" y="1025" textLength="65.500" lengthAdjust="spacingAndGlyphs" style="fill:#10293f">9494/3 kb</text>

<!-- Watermark -->
<g style="opacity:.55">
<text x="1418.500" y="927" textLength="219" lengthAdjust="spacingAndGlyphs" style="font-size:25px;fill:#8a8a8a">Aktyvinti „Windows“</text>
<text x="1418.500" y="953" textLength="426" lengthAdjust="spacingAndGlyphs" style="font-size:15.500px;fill:#8a8a8a">Norėdami suaktyvinti „Windows“, eikite į kompiuterio</text>
<text x="1418.500" y="978" textLength="92.500" lengthAdjust="spacingAndGlyphs" style="font-size:15.500px;fill:#8a8a8a">parametrus.</text>
</g>
</svg>
</body></html>
